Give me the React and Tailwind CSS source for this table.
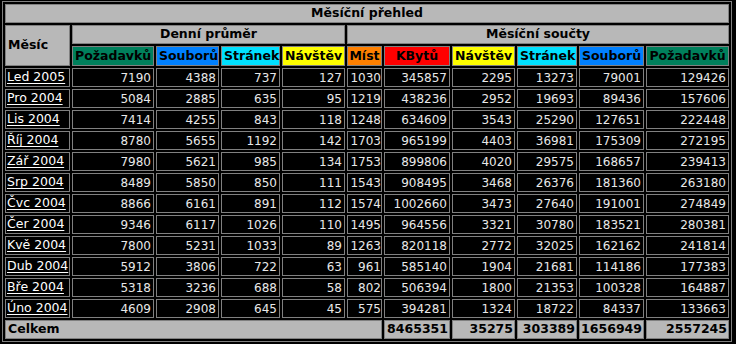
const rows = [
    ['Led 2005', 7190, 4388, 737, 127, 1030, 345857, 2295, 13273, 79001, 129426],
    ['Pro 2004', 5084, 2885, 635, 95, 1219, 438236, 2952, 19693, 89436, 157606],
    ['Lis 2004', 7414, 4255, 843, 118, 1248, 634609, 3543, 25290, 127651, 222448],
    ['Říj 2004', 8780, 5655, 1192, 142, 1703, 965199, 4403, 36981, 175309, 272195],
    ['Zář 2004', 7980, 5621, 985, 134, 1753, 899806, 4020, 29575, 168657, 239413],
    ['Srp 2004', 8489, 5850, 850, 111, 1543, 908495, 3468, 26376, 181360, 263180],
    ['Čvc 2004', 8866, 6161, 891, 112, 1574, 1002660, 3473, 27640, 191001, 274849],
    ['Čer 2004', 9346, 6117, 1026, 110, 1495, 964556, 3321, 30780, 183521, 280381],
    ['Kvě 2004', 7800, 5231, 1033, 89, 1263, 820118, 2772, 32025, 162162, 241814],
    ['Dub 2004', 5912, 3806, 722, 63, 961, 585140, 1904, 21681, 114186, 177383],
    ['Bře 2004', 5318, 3236, 688, 58, 802, 506394, 1800, 21353, 100328, 164887],
    ['Úno 2004', 4609, 2908, 645, 45, 575, 394281, 1324, 18722, 84337, 133663],
]

const totals = [8465351, 35275, 303389, 1656949, 2557245]

const cell = 'border border-[#808080] h-[19px] px-[2px] leading-none whitespace-nowrap'
const head = cell + ' bg-[#b8b8b8] text-black font-bold text-[12.5px]'
const color = cell + ' h-[20px] font-bold text-black text-center text-[12.5px]'

export default function App() {
    return (
        <div className="min-h-screen bg-black pt-px pl-[2px]" style={{ fontFamily: '"DejaVu Sans", Verdana, sans-serif' }}>
            <table className="w-[730px] table-fixed border-separate border-spacing-[2px] border border-[#808080] bg-black text-[12px]">
                <colgroup>
                    <col className="w-[65px]" />
                    <col className="w-[82px]" />
                    <col className="w-[63px]" />
                    <col className="w-[59px]" />
                    <col className="w-[63px]" />
                    <col className="w-[35px]" />
                    <col className="w-[66px]" />
                    <col className="w-[63px]" />
                    <col className="w-[60px]" />
                    <col className="w-[65px]" />
                    <col className="w-[83px]" />
                </colgroup>
                <thead>
                    <tr>
                        <th colSpan={11} className={head + ' text-center'}>Měsíční přehled</th>
                    </tr>
                    <tr>
                        <th rowSpan={2} className={head + ' text-left align-middle'}>Měsíc</th>
                        <th colSpan={4} className={head + ' text-center'}>Denní průměr</th>
                        <th colSpan={6} className={head + ' text-center'}>Měsíční součty</th>
                    </tr>
                    <tr>
                        <th className={color + ' bg-[#00805c]'}>Požadavků</th>
                        <th className={color + ' bg-[#0080ff]'}>Souborů</th>
                        <th className={color + ' bg-[#00e0ff]'}>Stránek</th>
                        <th className={color + ' bg-[#ffff00]'}>Návštěv</th>
                        <th className={color + ' bg-[#ff8000] !px-0'}>Míst</th>
                        <th className={color + ' bg-[#ff0000]'}>KBytů</th>
                        <th className={color + ' bg-[#ffff00]'}>Návštěv</th>
                        <th className={color + ' bg-[#00e0ff]'}>Stránek</th>
                        <th className={color + ' bg-[#0080ff]'}>Souborů</th>
                        <th className={color + ' bg-[#00805c]'}>Požadavků</th>
                    </tr>
                </thead>
                <tbody>
                    {rows.map((r) => (
                        <tr key={r[0]}>
                            <td className={cell + ' text-left !px-[1px]'}>
                                <a href="#" className="text-[12.5px] text-white underline underline-offset-2">{r[0]}</a>
                            </td>
                            {r.slice(1).map((v, i) => (
                                <td key={i} className={cell + ' text-right text-[#e8e8e8]' + (i === 4 ? ' !px-0' : '')}>{v}</td>
                            ))}
                        </tr>
                    ))}
                    <tr>
                        <td colSpan={6} className={head + ' text-left'}>Celkem</td>
                        {totals.map((v, i) => (
                            <td key={i} className={head + ' text-right !px-[1px]'}>{v}</td>
                        ))}
                    </tr>
                </tbody>
            </table>
        </div>
    )
}
